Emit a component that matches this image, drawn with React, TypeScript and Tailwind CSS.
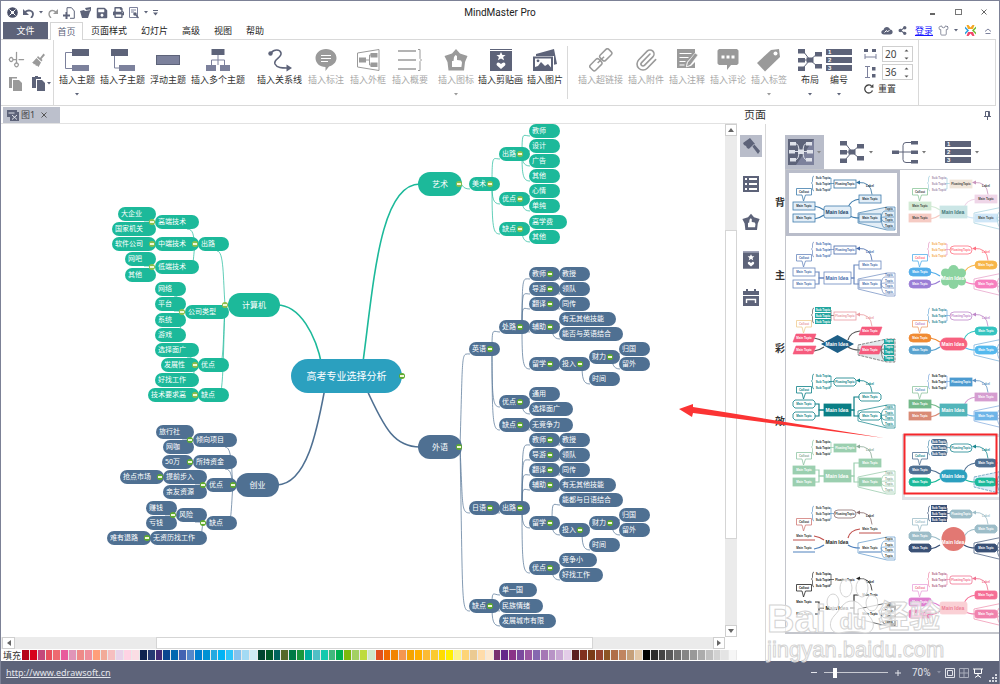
import type { ReactNode } from "react";
import { FaPrint, FaSave, FaShareAlt } from "react-icons/fa";
import { Paperclip, Scissors, Shirt } from "lucide-react";

const DARK = "#5d6379";
const LIGHT = "#7c819c";
const GRAY = "#9a9a9a";

const GREEN = "#1cb99a";
const BLUE = "#4f7092";

/* ---------- mind map data ---------- */

type Topic = { x: number; y: number; text: string; kids: Topic[] };

const t = (x: number, y: number, text: string, kids: Topic[] = []): Topic => ({ x, y, text, kids });

type Branch = { root: Topic; w: number; color: string; side: "left" | "right"; link: string };

// where the sheet starts inside the window
const OX = 1;
const OY = 124;

const BRANCHES: Branch[] = [
  {
    color: GREEN,
    side: "right",
    w: 44,
    link: "M363 362 C374 280 380 184 420 184",
    root: t(418, 184, "艺术", [
      t(469, 184, "美术", [
        t(499, 154, "出路", [t(529, 131, "教师"), t(529, 146, "设计"), t(529, 161, "广告"), t(529, 176, "其他")]),
        t(499, 199, "优点", [t(529, 191, "心情"), t(529, 206, "单纯")]),
        t(499, 229, "缺点", [t(529, 222, "高学费"), t(529, 237, "其他")]),
      ]),
    ]),
  },
  {
    color: BLUE,
    side: "right",
    w: 44,
    link: "M366 388 C385 430 395 447 420 447",
    root: t(418, 447, "外语", [
      t(469, 349, "英语", [
        t(499, 327, "处路", [
          t(529, 274, "教师", [t(559, 274, "教授")]),
          t(529, 289, "导游", [t(559, 289, "领队")]),
          t(529, 304, "翻译", [t(559, 304, "同传")]),
          t(529, 327, "辅助", [t(559, 319, "有无其他技能"), t(559, 334, "能否与英语结合")]),
          t(529, 364, "留学", [
            t(559, 364, "投入", [
              t(589, 357, "财力", [t(619, 349, "归国"), t(619, 364, "留外")]),
              t(589, 379, "时间"),
            ]),
          ]),
        ]),
        t(499, 402, "优点", [t(529, 394, "通用"), t(529, 409, "选择面广")]),
        t(499, 425, "缺点", [t(529, 425, "无竞争力")]),
      ]),
      t(469, 508, "日语", [
        t(499, 508, "出路", [
          t(529, 440, "教师", [t(559, 440, "教授")]),
          t(529, 455, "导游", [t(559, 455, "领队")]),
          t(529, 470, "翻译", [t(559, 470, "同传")]),
          t(529, 485, "辅助", [t(559, 485, "有无其他技能")]),
          t(529, 523, "留学", [
            t(559, 500, "能都与日语结合"),
            t(559, 530, "投入", [
              t(589, 523, "财力", [t(619, 515, "归国"), t(619, 530, "留外")]),
              t(589, 545, "时间"),
            ]),
          ]),
          t(529, 568, "优点", [t(559, 560, "竞争小"), t(559, 575, "好找工作")]),
        ]),
      ]),
      t(469, 606, "缺点", [t(499, 590, "单一国"), t(499, 606, "民族情绪"), t(499, 621, "发展城市有限")]),
    ]),
  },
  {
    color: GREEN,
    side: "left",
    w: 52,
    link: "M277 305 C300 305 316 335 322 366",
    root: t(228, 305, "计算机", [
      t(198, 244, "出路", [
        t(155, 222, "高端技术", [t(118, 214, "大企业"), t(112, 229, "国家机关")]),
        t(155, 244, "中端技术", [t(112, 244, "软件公司")]),
        t(155, 267, "低端技术", [t(125, 259, "网吧"), t(125, 275, "其他")]),
      ]),
      t(185, 312, "公司类型", [t(155, 289, "网络"), t(155, 304, "平台"), t(155, 320, "系统"), t(155, 335, "游戏")]),
      t(198, 365, "优点", [t(155, 350, "选择面广"), t(161, 365, "发展性"), t(155, 380, "好找工作")]),
      t(198, 395, "缺点", [t(148, 395, "技术要求高")]),
    ]),
  },
  {
    color: BLUE,
    side: "left",
    w: 43,
    link: "M277 485 C308 484 318 425 325 388",
    root: t(236, 485, "创业", [
      t(193, 440, "倾向项目", [t(156, 432, "旅行社"), t(163, 447, "网咖")]),
      t(193, 462, "所持资金", [t(162, 462, "50万")]),
      t(206, 485, "优点", [t(163, 477, "提前步入", [t(120, 477, "抢点市场")]), t(163, 492, "亲友资源")]),
      t(206, 523, "缺点", [
        t(176, 515, "风险", [t(146, 508, "赚钱"), t(146, 523, "亏钱")]),
        t(150, 538, "无资历找工作", [t(107, 538, "难有退路")]),
      ]),
    ]),
  },
];

// two digits take the room of one Chinese character
function topicWidth(text: string) {
  const chars = [...text].reduce((sum, c) => sum + (c < "\u0080" ? 0.5 : 1), 0);
  return Math.round(31 + (chars - 2) * 6.5);
}

function flatten(topic: Topic): Topic[] {
  return topic.kids.flatMap((kid) => [...flatten(kid), kid]);
}

function linksOf(topic: Topic, side: "left" | "right", root: boolean): string[] {
  return topic.kids.flatMap((kid) => {
    const end = kid.y + (kid.y < topic.y && side === "left" ? 7 : 5);
    let d: string;
    if (side === "right") {
      const x = topic.x + (root ? 42 : 23);
      d = `M${x} ${topic.y} C${x + (root ? 3 : 0)} ${end - 6} ${x + 1} ${end} ${kid.x + 1} ${end}`;
    } else {
      const x = topic.x - 3;
      const right = kid.x + topicWidth(kid.text) - 12;
      d = `M${x} ${topic.y} C${x - 2} ${(topic.y + end) / 2} ${x - 1} ${end} ${right} ${end}`;
    }
    return [d, ...linksOf(kid, side, false)];
  });
}

function Badge({ x, y, faded }: { x: number; y: number; faded?: boolean }) {
  return (
    <div
      className={`absolute flex size-[6px] items-center justify-center rounded-full ${faded ? "bg-[#8cbf4a]" : "bg-[#5eab2e]"}`}
      style={{ left: x - OX - 3, top: y - OY - 3 }}
    >
      <div className="h-[2px] w-[4px] bg-[#f1f7d8]" />
    </div>
  );
}

function MindMap() {
  return (
    <div className="relative min-w-0 flex-1 overflow-hidden bg-white">
      <svg className="absolute left-0 top-0" width="724" height="514" viewBox="1 124 724 514" fill="none">
        {BRANCHES.map((b) => (
          <g key={b.root.text} stroke={b.color}>
            <path d={b.link} strokeWidth="1.6" />
            {linksOf(b.root, b.side, true).map((d, i) => (
              <path key={i} d={d} strokeWidth="0.7" />
            ))}
          </g>
        ))}
      </svg>
      {BRANCHES.map((b) => {
        const topics = flatten(b.root);
        const fill = b.color === GREEN ? "bg-[#1cb99a]" : "bg-[#4f7092]";
        return (
          <div key={b.root.text}>
            {topics.map((n) => (
              <div
                key={`${n.x}-${n.y}`}
                className={`absolute h-[14px] whitespace-nowrap rounded-full pl-[3px] text-[7px] leading-[14px] text-white ${fill}`}
                style={{ left: n.x - OX, top: n.y - OY - 7, width: topicWidth(n.text) }}
              >
                {n.text}
              </div>
            ))}
            <div
              className={`absolute h-[24px] rounded-full text-center text-[8px] leading-[24px] text-white ${fill}`}
              style={{ left: b.root.x - OX, top: b.root.y - OY - 12, width: b.w }}
            >
              {b.root.text}
            </div>
            {topics
              .filter((n) => n.kids.length > 0)
              .map((n) => (
                <Badge key={`${n.x}-${n.y}`} x={b.side === "right" ? n.x + 21 : n.x - 3} y={n.y} faded={b.color === GREEN} />
              ))}
            <Badge x={b.side === "right" ? b.root.x + 41 : b.root.x - 3} y={b.root.y} faded={b.color === GREEN} />
          </div>
        );
      })}
      <div
        className="absolute h-[34px] w-[111px] rounded-full bg-[#2ba0bf] text-center text-[10px] leading-[34px] text-white"
        style={{ left: 291 - OX, top: 359 - OY }}
      >
        高考专业选择分析
      </div>
      <Badge x={402} y={376} />
    </div>
  );
}

/* ---------- small icons ---------- */

function Caret({ color = DARK }: { color?: string }) {
  return (
    <svg width="4" height="3" viewBox="0 0 4 3" className="shrink-0">
      <path d="M0 0h4L2 2.6z" fill={color} />
    </svg>
  );
}

function Icon({ size = 24, w, children }: { size?: number; w?: number; children: ReactNode }) {
  return (
    <svg width={w ?? size} height={size} viewBox={`0 0 ${w ?? size} ${size}`} fill="none" className="shrink-0">
      {children}
    </svg>
  );
}

const STAR = "M12 4l1.4 3h3.2l-2.5 2.1 1 3.2L12 10.5l-3.1 1.8 1-3.2L7.4 7h3.2z";
const HEART = "M12 21l-4-3.6c-1.5-2 1-4 2.6-2.4l1.4 1 1.4-1c1.6-1.6 4.1.4 2.6 2.4z";

const hand = <path d="M8 19v-6h1.5l.5-4 1.500-2 1.500 1V12l4 .6 1 2-.6 4.400z" fill="#fff" />;

const icons = {
  topic: (
    <Icon>
      <path d="M7 4.5H.5v16H7" stroke={LIGHT} />
      <path fill={DARK} d="M7 1h17v7H7z" />
      <path fill={LIGHT} d="M7 17h17v6H7z" />
    </Icon>
  ),
  subtopic: (
    <Icon>
      <path d="M3.5 8v12H8" stroke={LIGHT} />
      <path fill={DARK} d="M0 1h17v7H0z" />
      <path fill={LIGHT} d="M8 17h16v6H8z" />
    </Icon>
  ),
  floating: (
    <Icon>
      <path fill={DARK} d="M0 7h24v10H0z" />
      <path fill={LIGHT} d="M1 8h22v8H1z" />
    </Icon>
  ),
  multi: (
    <Icon>
      <path d="M12 7v10M5.5 18v-6h13v6" stroke={LIGHT} />
      <path fill={DARK} d="M5.5 1h13v6h-13z" />
      <path fill={LIGHT} d="M0 17h10v6H0zM14 17h10v6H14z" />
    </Icon>
  ),
  relation: (
    <Icon>
      <path d="M3 5c3-4 9-4 10 0 1 5-8 6-6 11 2 4 7 4 12 4" stroke={DARK} strokeWidth="1.6" />
      <circle cx="2.5" cy="5.5" r="2.200" fill={DARK} />
      <path fill={DARK} d="M18.5 16.5 24 20l-5.500 3.500z" />
    </Icon>
  ),
  callout: (
    <Icon>
      <path fill={GRAY} d="M12 1c6 0 10.5 4 10.5 9 0 4-3 7.3-7.5 8.5L11.5 23v-4C5.6 19 1.5 15 1.5 10S6 1 12 1z" />
      <path d="M7 7.5h10M7 10.5h10M7 13.5h7" stroke="#fff" strokeWidth="1.2" />
    </Icon>
  ),
  boundary: (
    <Icon>
      <path d="M1.5 5 23 1.5v21L1.500 19z" stroke={GRAY} />
      <path d="M10 12h3.5M15 7h-1.5v10H15" stroke={GRAY} />
      <path fill={GRAY} d="M3 9.5h7v5H3zM14.5 5h7v4.5h-7zM14.5 14.5h7V19h-7z" />
    </Icon>
  ),
  summary: (
    <Icon>
      <path d="M0 3h18M0 12h18M0 21h18" stroke={GRAY} strokeWidth="1.6" />
      <path d="M20 1.5h2v9l1.5 1.5-1.5 1.5v9h-2" stroke={GRAY} />
    </Icon>
  ),
  mark: (
    <Icon>
      <path fill={GRAY} d="M12 1l4 4.5L23.5 8 21 14l-1 8.5H4.500L3.500 14 .5 8 8 5.500z" />
      {hand}
    </Icon>
  ),
  clipart: (
    <Icon>
      <path d="M1 1.5h22" stroke={DARK} />
      <path fill={DARK} d="M1 3h22v20H1z" />
      <path fill="#fff" d={STAR} />
      <path fill="#fff" d={HEART} />
    </Icon>
  ),
  picture: (
    <Icon>
      <path fill={DARK} d="M3 6 21 1l3 15-3 .8V8H3z" />
      <path fill={DARK} d="M0 8.5h20V23H0z" />
      <path fill="#fff" d="M2 10.5h16v9l-3-3.5-3 2-4-4-3 4-3 1z" />
      <circle cx="5" cy="12.8" r="1.4" fill={DARK} />
    </Icon>
  ),
  link: (
    <Icon>
      <g stroke={GRAY} strokeWidth="1.5" transform="rotate(-45 12 12)">
        <rect x="-1" y="8" width="12" height="7.5" rx="2" />
        <rect x="13" y="8" width="12" height="7.5" rx="2" />
        <path d="M7.5 11.8h9" />
      </g>
    </Icon>
  ),
  note: (
    <Icon>
      <path fill={GRAY} d="M2 1h18v5l-8 8-1 5 5-1 4-4v6H2z" />
      <path d="M4.5 5.5h12M4.5 9.5h9M4.5 13.5h6M4.5 17h5" stroke="#fff" strokeWidth="1.2" />
      <path fill={GRAY} stroke="#fff" strokeWidth=".6" d="M20 5l3 2-7.5 10-4 2 1-4.5z" />
    </Icon>
  ),
  comment: (
    <Icon>
      <path fill={GRAY} d="M3 1h18l1.5 1.5v13L21 17h-6l-4 5v-5H3l-1.500-1.500v-13z" />
      <path fill="#fff" d="M5.5 7.5h3v3h-3zM10.5 7.5h3v3h-3zM15.5 7.5h3v3h-3z" />
    </Icon>
  ),
  tag: (
    <Icon>
      <path fill={GRAY} d="M14 2l8-1 1 8L8 23.5 0 15z" />
      <circle cx="18.5" cy="5.5" r="2" fill="#fff" />
    </Icon>
  ),
};

function LayoutIcon() {
  return (
    <svg width="24" height="24" viewBox="0 0 24 24" className="shrink-0">
      <path d="M5 3l7 9 7-6M5 20l7-8 7 6M5 12h7" stroke={DARK} fill="none" />
      <path fill={DARK} d="M0 1h7v4.5H0zM0 10h7v4.5H0zM0 18.5h7V23H0zM8.5 9.5h7v5h-7zM17 4h7v4.5h-7zM17 16h7v4.5h-7z" />
    </svg>
  );
}

function NumberIcon() {
  return (
    <svg width="26" height="24" viewBox="0 0 26 24" className="shrink-0">
      <path fill={DARK} d="M0 1h26v6H0zM0 9h26v6H0zM0 17h26v6H0z" />
      <g fill="#fff" fontSize="6" fontWeight="700" fontFamily="Liberation Sans, sans-serif">
        <text x="2" y="6">1</text>
        <text x="2" y="14">2</text>
        <text x="2" y="22">3</text>
      </g>
    </svg>
  );
}

function TreeIcon() {
  return (
    <svg width="26" height="24" viewBox="0 0 26 24" className="shrink-0">
      <path d="M5 12h16M20 2.5h-6q-3 0-3 3v14q0 3 3 3h6" stroke={DARK} fill="none" />
      <path fill={DARK} d="M0 10.500h7v3.500H0zM19 1h7v3.500h-7zM19 10.500h7v3.500h-7zM19 20h7v3.500h-7z" />
    </svg>
  );
}

function ThemeIcon() {
  return (
    <svg width="26" height="26" viewBox="0 0 26 26" className="shrink-0">
      <path fill={DARK} d="M0 0h26v26H0z" />
      <path fill={LIGHT} d="M13 0h13L8 26h18V0z" />
      <path d="M7 4.500q4 0 4 8t-4 8.500M19 4.500q-4 0-4 8t4 8.500M7 12.500h12" stroke="#dfe2ea" fill="none" />
      <path fill="#dfe2ea" d="M2 3h6v3.500H2zM1 11h6v3.500H1zM2 19h6v3.500H2zM18 3h6v3.500h-6zM19 11h6v3.500h-6zM18 19h6v3.500h-6zM10 10.500h6v4.500h-6z" />
    </svg>
  );
}

/* ---------- title bar and tabs ---------- */

function TitleBar() {
  const btn = "flex h-[12px] items-center";
  return (
    <header className="grid h-[21px] shrink-0 grid-cols-[1fr_auto_1fr] items-center bg-white">
      <div className="flex items-center gap-[5px] pl-[6px] pt-[2px]">
        <button aria-label="程序" className={btn}>
          <Icon size={11}>
            <circle cx="5.5" cy="5.5" r="5.300" fill="#4a5068" />
            <path d="M2.500 2.500l6 6M8.500 2.500l-6 6" stroke="#fff" />
            <circle cx="5.5" cy="5.5" r="1.500" fill="#fff" />
          </Icon>
        </button>
        <button aria-label="撤销" className={btn}>
          <Icon size={10} w={11}>
            <path d="M2 4c4-3 8-1 8 2 0 2-1 3-2 4" stroke={DARK} strokeWidth="1.8" />
            <path d="M0 1v6h6z" fill={DARK} />
          </Icon>
        </button>
        <Caret />
        <button aria-label="恢复" className={btn}>
          <Icon size={10}>
            <path d="M8 4C4 1 1 3 1 6c0 2 1 3 2 4" stroke={GRAY} strokeWidth="1.4" />
            <path d="M10 1v5H5z" fill={GRAY} />
          </Icon>
        </button>
        <button aria-label="新建" className={btn}>
          <Icon size={12}>
            <path d="M4 5V.7h4.500L11.300 4v7.300H7" stroke={DARK} />
            <path d="M3.500 5v7M0 8.500h7" stroke={DARK} strokeWidth="2" />
          </Icon>
        </button>
        <button aria-label="打开" className={btn}>
          <Icon size={11}>
            <path fill={DARK} d="M0 4l4-1 1 1 5.500-1L8 11H2zM5 1l6-1v5l-1-2.500-4 .6z" />
          </Icon>
        </button>
        <button aria-label="保存" className={btn}>
          <FaSave size={12} color={DARK} />
        </button>
        <button aria-label="打印" className={btn}>
          <FaPrint size={11} color={DARK} />
        </button>
        <button aria-label="预览" className={btn}>
          <Icon size={12} w={10}>
            <path d="M.5.500h8v10h-8zM2 3h5M2 5h3" stroke={LIGHT} />
            <circle cx="6" cy="7" r="1.800" fill={DARK} />
            <path d="M7 8l2.500 3" stroke={DARK} strokeWidth="1.4" />
          </Icon>
        </button>
        <Caret />
        <Icon size={6} w={5}>
          <path d="M0 .5h5" stroke={DARK} />
          <path d="M0 2.500h5L2.500 5.500z" fill={DARK} />
        </Icon>
      </div>
      <h1 className="pt-[2px] font-[Roboto] text-[10px] leading-none text-[#222]">MindMaster Pro</h1>
      <div className="flex justify-end pr-[2px]">
        <button aria-label="最小化" className="flex h-[18px] w-[26px] items-center justify-center">
          <div className="mt-[4px] h-[2px] w-[5px] bg-[#666]" />
        </button>
        <button aria-label="最大化" className="flex h-[18px] w-[26px] items-center justify-center">
          <div className="h-[6px] w-[7px] border border-[#777]" />
        </button>
        <button aria-label="关闭" className="flex h-[18px] w-[26px] items-center justify-center">
          <Icon size={6}>
            <path d="M.5.500l5 5M5.500.500l-5 5" stroke="#666" />
          </Icon>
        </button>
      </div>
    </header>
  );
}

const MENU = ["页面样式", "幻灯片", "高级", "视图", "帮助"];

function MenuBar() {
  return (
    <nav className="flex h-[17px] shrink-0 items-stretch pl-[2px] text-[9px] text-[#222]">
      <button className="w-[45px] bg-[#5d6379] text-white">文件</button>
      <button className="z-10 -mb-px ml-[2px] w-[33px] border border-b-0 border-[#d5d5d5] bg-white text-[#5d6379]">首页</button>
      <div className="flex gap-[14px] pl-[8px]">
        {MENU.map((m) => (
          <button key={m}>{m}</button>
        ))}
      </div>
      <div className="ml-auto flex items-center gap-[5px] pr-[7px]">
        <Icon size={9} w={12}>
          <path fill={DARK} d="M3 8.500C-.5 8.500-.500 4.500 2.500 4 3 0 8.500 0 9 3.500c3.500 0 3.500 5 0 5z" />
          <path d="M3.500 6.500l2-2 1 1.500 2-2" stroke="#fff" />
        </Icon>
        <FaShareAlt size={9} color={DARK} />
        <a href="#login" className="ml-[3px] text-[#1414ff] underline">登录</a>
        <Shirt size={11} color={DARK} strokeWidth={1.5} />
        <Caret />
        <span className="ml-[2px]">
          <Icon size={11}>
            <path d="M1.500 0h2L5.500 2.500 7.500 0h2L8 4H3z" fill="#f5a623" />
            <path d="M1.500 11h2l2-2.500 2 2.500h2L8 7H3z" fill="#f0476b" />
            <path d="M0 1.500l4 4-4 4v-2l2-2-2-2z" fill="#2a9fe0" />
            <path d="M11 1.500l-4 4 4 4v-2l-2-2 2-2z" fill="#6dbb2f" />
          </Icon>
        </span>
        <span className="ml-[3px]">
          <Icon size={6} w={8}>
            <path d="M1 3.500L4 1l3 2.500M1.500 5.500h5" stroke={LIGHT} />
          </Icon>
        </span>
      </div>
    </nav>
  );
}

/* ---------- ribbon ---------- */

type Tool = { label: string; icon: ReactNode; off?: boolean; menu?: boolean };

const INSERT: Tool[] = [
  { label: "插入主题", icon: icons.topic, menu: true },
  { label: "插入子主题", icon: icons.subtopic },
  { label: "浮动主题", icon: icons.floating },
  { label: "插入多个主题", icon: icons.multi },
];

const RELATE: Tool[] = [
  { label: "插入关系线", icon: icons.relation },
  { label: "插入标注", icon: icons.callout, off: true },
  { label: "插入外框", icon: icons.boundary, off: true },
  { label: "插入概要", icon: icons.summary, off: true },
];

const MEDIA: Tool[] = [
  { label: "插入图标", icon: icons.mark, off: true, menu: true },
  { label: "插入剪贴画", icon: icons.clipart },
  { label: "插入图片", icon: icons.picture },
];

const ATTACH: Tool[] = [
  { label: "插入超链接", icon: icons.link, off: true },
  { label: "插入附件", icon: <Paperclip size={24} color={GRAY} strokeWidth={1.6} />, off: true },
  { label: "插入注释", icon: icons.note, off: true },
  { label: "插入评论", icon: icons.comment, off: true },
  { label: "插入标签", icon: icons.tag, off: true, menu: true },
];

const ARRANGE: Tool[] = [
  { label: "布局", icon: <LayoutIcon />, menu: true },
  { label: "编号", icon: <NumberIcon />, menu: true },
];

function ToolGroup({ tools, className, short }: { tools: Tool[]; className: string; short?: boolean }) {
  return (
    <div className={`flex shrink-0 ${className}`}>
      {tools.map((tool) => (
        <button key={tool.label} disabled={tool.off} className="flex flex-col items-center pt-[8px]">
          {tool.icon}
          <span className={`mt-[2px] whitespace-nowrap text-[9px] leading-[12px] ${tool.off ? "text-[#a8a8a8]" : "text-[#333]"}`}>
            {tool.label}
          </span>
          {tool.menu && (
            <span className="mt-[7px]">
              <Caret color={tool.off ? GRAY : DARK} />
            </span>
          )}
        </button>
      ))}
      <div className={`ml-auto w-px bg-[#d9d9d9] ${short ? "my-[6px]" : ""}`} />
    </div>
  );
}

function Spinner({ id, label, value }: { id: string; label: string; value: number }) {
  return (
    <div className="flex h-[16px] w-[31px] items-center border border-[#cfcfcf] bg-white pl-[2px]">
      <input id={id} aria-label={label} defaultValue={value} className="w-[17px] text-[10px] leading-none text-[#444] outline-none" />
      <svg width="5" height="11" viewBox="0 0 5 11" className="ml-[2px]">
        <path d="M.5 2.500h4L2.500.500zM.5 8.500h4l-2 2z" fill="#555" />
      </svg>
    </div>
  );
}

function Ribbon() {
  return (
    <section className="mr-[3px] flex h-[67px] shrink-0 border-y border-r border-[#d9d9d9] bg-white">
      <div className="flex w-[53px] shrink-0">
        <div className="grid grid-cols-2 content-start items-center gap-x-[4px] gap-y-[9px] pl-[8px] pt-[12px]">
          <button aria-label="剪切" disabled>
            <Scissors size={15} color={GRAY} className="-rotate-45" />
          </button>
          <button aria-label="格式刷" disabled>
            <Icon size={14} w={13}>
              <path fill={GRAY} d="M8 5l3.500-4.500L13 2 9.500 6l1 1-1 1.500L5 4.500 6 3zM4.500 5l4.500 4.500L6.500 14l-1.500-1.500L4 13l-1-2-1 .5-1-1.500-1 0z" />
            </Icon>
          </button>
          <button aria-label="复制" disabled>
            <Icon size={14}>
              <path fill={GRAY} d="M0 0h8v1.500H3V11H0z" />
              <path fill={GRAY} d="M4 3h6l3 3v8H4z" />
            </Icon>
          </button>
          <button aria-label="粘贴" className="flex items-center gap-[2px]">
            <Icon size={15} w={13}>
              <path fill={DARK} d="M0 1h3V0h3v1h3v2H4v9H0z" />
              <path fill={DARK} d="M5 4h5l3 3v8H5z" />
            </Icon>
            <Caret />
          </button>
        </div>
        <div className="ml-auto w-px bg-[#d9d9d9]" />
      </div>
      <ToolGroup tools={INSERT} className="w-[194px] gap-[5px] pl-[5px]" short />
      <ToolGroup tools={RELATE} className="w-[185px] gap-[6px] pl-[9px]" />
      <ToolGroup tools={MEDIA} className="w-[135px] gap-[4px] pl-[5px]" short />
      <ToolGroup tools={ATTACH} className="w-[223px] gap-[5px] pl-[10px]" />
      <ToolGroup tools={ARRANGE} className="w-[64px] gap-[4px] pl-[7px]" short />
      <div className="flex w-[64px] shrink-0">
        <div className="flex flex-col gap-[2px] pl-[9px] pt-[6px]">
          <label htmlFor="h-gap" className="flex items-center gap-[5px]">
            <Icon size={12} w={13}>
              <path d="M1 6v5M12 6v5M1 9h11" stroke={LIGHT} />
              <path fill={DARK} d="M0 1h4v3H0zM8 1h4v3H8z" />
            </Icon>
            <Spinner id="h-gap" label="水平间距" value={20} />
          </label>
          <label htmlFor="v-gap" className="flex items-center gap-[5px]">
            <Icon size={12} w={13}>
              <path d="M1 .5h5M1 11.500h5M3.500.500v11" stroke={LIGHT} />
              <path fill={DARK} d="M8 1h3.500v3.500H8zM8 8h3.500v3.500H8z" />
            </Icon>
            <Spinner id="v-gap" label="垂直间距" value={36} />
          </label>
          <button className="flex items-center gap-[4px] text-[9px] text-[#333]">
            <Icon size={10}>
              <path d="M8.500 6.500A4 4 0 1 1 7.500 2" stroke="#444" strokeWidth="1.3" />
              <path d="M6 3.500L9.500 3.800 9.300 0z" fill="#444" />
            </Icon>
            重置
          </button>
        </div>
        <div className="ml-auto w-px bg-[#d9d9d9]" />
      </div>
    </section>
  );
}

/* ---------- drawing area ---------- */

function DocTabs() {
  return (
    <div className="flex h-[18px] shrink-0 items-end border-b border-[#e2e2e2] pl-[2px]">
      <div className="flex h-[16px] w-[57px] items-center bg-[#bcc0cc] pl-[4px] text-[9px] text-[#444]">
        <Icon size={12}>
          <path fill={DARK} d="M0 1h10v2h2v9H3V8H0z" />
          <path d="M1.500 4h6M5 6l5 4.500M10 6l-5 4.500" stroke="#dfe2ea" />
        </Icon>
        <span className="ml-[2px]">图1</span>
        <button aria-label="关闭图1" className="ml-[6px]">
          <Icon size={6}>
            <path d="M.5.500l5 5M5.500.500l-5 5" stroke="#555" />
          </Icon>
        </button>
      </div>
    </div>
  );
}

function VerticalScroll() {
  return (
    <div className="flex w-[12px] shrink-0 flex-col bg-[#ebebeb]">
      <button aria-label="向上" className="flex h-[12px] shrink-0 items-center justify-center border border-[#cfcfcf] bg-white">
        <Icon size={4} w={6}><path d="M0 4h6L3 0z" fill="#666" /></Icon>
      </button>
      <div className="basis-[94px]" />
      <div className="flex-1 border border-[#d5d5d5] bg-white" />
      <div className="basis-[86px]" />
      <button aria-label="向下" className="flex h-[12px] shrink-0 items-center justify-center border border-[#cfcfcf] bg-white">
        <Icon size={4} w={6}><path d="M0 0h6L3 4z" fill="#666" /></Icon>
      </button>
    </div>
  );
}

function HorizontalScroll() {
  return (
    <div className="mr-[12px] flex h-[12px] shrink-0 bg-[#ebebeb]">
      <button aria-label="向左" className="ml-px flex w-[13px] items-center justify-center border border-[#cfcfcf] bg-white">
        <Icon size={6} w={4}><path d="M4 0v6L0 3z" fill="#666" /></Icon>
      </button>
      <div className="basis-[141px]" />
      <div className="flex-1 border border-[#d5d5d5] bg-white" />
      <div className="basis-[120px]" />
      <button aria-label="向右" className="flex w-[12px] items-center justify-center border border-[#cfcfcf] bg-white">
        <Icon size={6} w={4}><path d="M0 0v6l4-3z" fill="#666" /></Icon>
      </button>
    </div>
  );
}

const SWATCHES = (
  "b5051b d7001c c4487b e8505e ee6a70 e85a9c e095b8 ee8a88 ef8f9c ff9f7a f2ab98 f6bfc0 e8d3ea ffd3e4 fbdde4 " +
  "0f2350 263a73 432a76 0a4690 0068b0 4363b2 5588ca 007fd0 0092d4 25a9e0 00b3f4 2ec5fa 84c2ee a3daf4 cfedf6 " +
  "00452f 005a28 00645e 56682a 007a45 1a963c 00aea0 50bfc6 14c9ad 42b87c 00b04f 7eb90c a3d063 bedb3c cfe9c8 " +
  "e2501c f06800 f18400 f49650 f5a400 ffae00 fcbb35 fbca30 ffdc00 fff000 fdf488 fdd475 ebca92 ffdcaa fce8d0 " +
  "79306f 65268a 8a3487 7b4a9e 9b57a2 8568b0 a678b5 b894c6 c9a8d4 e3cce8 " +
  "5c1f20 80301e 7a3b18 96432f 8d5524 b06d48 c08560 c5a07a e2c8a8 " +
  "000000 2b2b2b 444444 5a5a5a 707070 858585 999999 acacac c0c0c0 d2d2d2 e4e4e4 f6f6f6"
).split(" ");

function ColorBar() {
  return (
    <div className="flex h-[12px] shrink-0 items-center pl-[2px]">
      <span className="w-[19px] shrink-0 text-[9px] leading-none text-[#333]">填充</span>
      <div className="flex h-[10px] flex-1 bg-[#e9e9e9]">
        {SWATCHES.map((c, i) => (
          <div key={i} className="mr-px flex-1" style={{ backgroundColor: `#${c}` }} />
        ))}
      </div>
    </div>
  );
}

/* ---------- theme gallery ---------- */

type Shape = "rect" | "round" | "pill" | "hex" | "para" | "diamond" | "cloud" | "circle" | "none" | "line";

type Theme = {
  main: string;
  mainShape: Shape;
  mainText: string;
  topics: [string, string, string, string];
  topicShape: Shape;
  text: string;
  line: string;
  accent: string;
  callout: string;
  floating?: string;
  sub?: string;
  outline?: boolean;
  area?: string;
  square?: boolean;
};

const four = (c: string): [string, string, string, string] => [c, c, c, c];

const THEMES: Theme[] = [
  { main: "#e3eef7", mainShape: "round", mainText: "#1c3f66", topics: four("#e3eef7"), topicShape: "rect", text: "#1d3348", line: "#3f7cac", accent: "#2d6f9f", callout: "#3f7cac", outline: true, area: "#e3eef7" },
  { main: "#cbe6e6", mainShape: "rect", mainText: "#467879", topics: ["#d3ead5", "#f6cbc4", "#efd6e8", "#cfe6f7"], topicShape: "rect", text: "#444", line: "#a0cfdc", accent: "#c995bd", callout: "#8cc79a", floating: "#f1e6da", sub: "#a58aa8" },
  { main: "#fff", mainShape: "rect", mainText: "#4468a8", topics: four("#fff"), topicShape: "rect", text: "#4468a8", line: "#6a88be", accent: "#4468a8", callout: "#6a88be", outline: true, square: true },
  { main: "#8bd3a0", mainShape: "cloud", mainText: "#fff", topics: ["#54aeea", "#9b7fd6", "#f7b64a", "#f77fbf"], topicShape: "pill", text: "#fff", line: "#e59ac4", accent: "#ff6f80", callout: "#54aeea", sub: "#f5a94e" },
  { main: "#1d5f87", mainShape: "diamond", mainText: "#fff", topics: four("#f65b7d"), topicShape: "para", text: "#fff", line: "#555", accent: "#e89aa0", callout: "#f0cc90", sub: "fill:#22a6a0", area: "#e2eaec" },
  { main: "#f7617f", mainShape: "pill", mainText: "#fff", topics: ["#f08a33", "#5aa3cf", "#35c4c0", "#54b9ee"], topicShape: "pill", text: "#fff", line: "#6baad8", accent: "#be86c9", callout: "#f0a070", sub: "#2b7f8e" },
  { main: "#0a7f86", mainShape: "rect", mainText: "#fff", topics: four("#fff"), topicShape: "hex", text: "#0a7f86", line: "#0a7f86", accent: "#0a7f86", callout: "#0a7f86", outline: true, square: true },
  { main: "#52b5ba", mainShape: "rect", mainText: "#fff", topics: ["#74b98a", "#d98b76", "#d59dd0", "#6fb5e8"], topicShape: "rect", text: "#fff", line: "#7da8dd", accent: "#6090c0", callout: "#8fc49f", floating: "#4d9bd0", sub: "#222" },
  { main: "#9bcfb0", mainShape: "rect", mainText: "#fff", topics: four("#9bcfb0"), topicShape: "rect", text: "#fff", line: "#8fc5a4", accent: "#8aa896", callout: "#8fc5a4", floating: "#9bcfb0", sub: "#222", square: true },
  { main: "#2ba0bf", mainShape: "pill", mainText: "#fff", topics: ["#4f7092", "#1cb99a", "#4f7092", "#1cb99a"], topicShape: "pill", text: "#fff", line: "#4f8fb0", accent: "#18868f", callout: "#4f7092", sub: "fill:#4f7092", area: "#e0edf8" },
  { main: "#fff", mainShape: "none", mainText: "#222", topics: ["#c0504d", "#4f81bd", "#c0504d", "#4f81bd"], topicShape: "line", text: "#333", line: "#5b95c8", accent: "#8a6c6c", callout: "#d07a76" },
  { main: "#e27873", mainShape: "circle", mainText: "#fff", topics: ["#9dbdc8", "#3a5176", "#9dbdc8", "#3a5176"], topicShape: "hex", text: "#fff", line: "#3a5176", accent: "#9dbdc8", callout: "#9dbdc8", floating: "#9dbdc8", sub: "fill:#3a5176" },
  { main: "#fff", mainShape: "none", mainText: "#111", topics: four("#fff"), topicShape: "none", text: "#111", line: "#333", accent: "#222", callout: "#222", square: true },
  { main: "#fad0d5", mainShape: "round", mainText: "#ee7f96", topics: ["#de7fd0", "#ec76b0", "#f56f96", "#f082ad"], topicShape: "round", text: "#fff", line: "#ef8aab", accent: "#f0708f", callout: "#e8a3dc", sub: "#b06080" },
];

function Box({ x, y, w, h, shape, fill, stroke }: { x: number; y: number; w: number; h: number; shape: Shape; fill: string; stroke: string }) {
  const cx = x + w / 2;
  const cy = y + h / 2;
  switch (shape) {
    case "none":
      return null;
    case "line":
      return <path d={`M${x} ${y + h}h${w}`} stroke={stroke} />;
    case "diamond":
      return <path d={`M${x - 3} ${cy}L${cx} ${y - 3}L${x + w + 3} ${cy}L${cx} ${y + h + 3}z`} fill={fill} />;
    case "circle":
      return <circle cx={cx} cy={cy - 3} r="12" fill={fill} />;
    case "cloud":
      return (
        <g fill={fill}>
          <circle cx={cx} cy={cy - 2} r="9" />
          <circle cx={cx} cy={cy - 8} r="5" />
          <circle cx={cx - 8} cy={cy - 5} r="4.500" />
          <circle cx={cx + 8} cy={cy - 5} r="4.500" />
          <circle cx={cx - 8} cy={cy + 3} r="4.500" />
          <circle cx={cx + 8} cy={cy + 3} r="4.500" />
          <circle cx={cx} cy={cy + 6} r="5" />
        </g>
      );
    case "para":
      return <path d={`M${x + 3} ${y}h${w - 2}l-3 ${h}h${2 - w}z`} fill={fill} stroke={stroke} strokeWidth=".6" />;
    case "hex":
      return <path d={`M${x + 2} ${y}h${w - 4}l2 2v${h - 4}l-2 2h${4 - w}l-2 -2v${4 - h}z`} fill={fill} stroke={stroke} strokeWidth=".8" />;
    default:
      return <rect x={x} y={y} width={w} height={h} rx={shape === "pill" ? h / 2 : shape === "round" ? 2 : 0} fill={fill} stroke={stroke} strokeWidth=".8" />;
  }
}

function ThemePreview({ theme }: { theme: Theme }) {
  const { line, topics, topicShape, accent } = theme;
  const subFilled = theme.sub?.startsWith("fill:");
  const subColor = theme.sub?.replace("fill:", "") ?? theme.text;
  const plain = theme.text === "#fff" ? accent : theme.text;
  const edge = (c: string) => (theme.outline ? line : c);
  const wire = (i: number) => (theme.outline || topics[i] === "#fff" || theme.topicShape === "para" ? line : topics[i]);
  const spots = [
    [7, 32],
    [7, 44],
    [73, 25],
    [73, 44],
  ];
  const curves = theme.square
    ? ["M29 36h4v6h5", "M29 48h4v-6h5", "M64 42h4V29h5", "M64 42h4v6h5"]
    : ["M28 36q6 1 10 4", "M28 49q6-1 10-4", "M62 38q2-8 12-9", "M62 45q4 3 12 3"];
  return (
    <svg width="114" height="66" viewBox="0 0 114 66" fill="none" fontFamily="Liberation Sans, sans-serif">
      <path d="M72 43L101 37h8v23h-8L72 53z" fill={theme.area ?? "none"} stroke={line} strokeWidth=".7" strokeDasharray={theme.area && !theme.outline ? "3 1" : undefined} />
      {curves.map((d, i) => (
        <path key={d} d={d} stroke={wire(i)} strokeWidth="1.2" />
      ))}
      <Box x={38} y={36} w={27} h={12} shape={theme.mainShape} fill={theme.main} stroke={edge(theme.main)} />
      <text x="51" y="44" textAnchor="middle" fontSize="5" fontWeight="700" fill={theme.mainText}>Main Idea</text>
      {spots.map(([x, y], i) => (
        <g key={i}>
          <Box x={x} y={y} w={22} h={8} shape={topicShape} fill={topics[i]} stroke={edge(topics[i])} />
          <text x={x + 11} y={y + 5} textAnchor="middle" fontSize="3" fontWeight="700" fill={theme.text}>Main Topic</text>
        </g>
      ))}
      <path d="M10.500 18.500h15v6.500h-6l-2 6-1.500-6h-5.500z" fill="#fff" stroke={theme.callout} strokeWidth=".8" />
      <text x="18" y="23" textAnchor="middle" fontSize="3" fontWeight="700" fill={plain}>Callout</text>
      <path d="M28 6q-1.500 0-1.500 3v2.500l-1 1.500 1 1.500V18q0 3 1.500 3M43 8h2v11h-2M43 13.500h5" stroke={line} strokeWidth=".7" />
      {[8, 14, 20].map((y) => (
        <g key={y}>
          {subFilled && <rect x="29" y={y - 3} width="16" height="5" rx={topicShape === "pill" ? 2.5 : 0} fill={subColor} />}
          <text x="37" y={y + 1} textAnchor="middle" fontSize="3" fontWeight="700" fill={subFilled ? "#fff" : subColor}>Sub Topic</text>
        </g>
      ))}
      <Box x={48} y={10} w={22} h={8} shape={topicShape === "para" ? "rect" : topicShape === "line" ? "pill" : topicShape} fill={theme.floating ?? "#fff"} stroke={theme.floating ?? accent} />
      <text x="59" y="15" textAnchor="middle" fontSize="3" fontWeight="700" fill={theme.floating && theme.text === "#fff" ? "#fff" : plain}>FloatingTopic</text>
      <path d="M72 12.500q13-1 14 12" stroke={accent} strokeWidth=".8" />
      <path d="M70 12.500l4-2v4z" fill={accent} />
      <text x="84" y="17" textAnchor="middle" fontSize="3" fontWeight="700" fill={plain}>Label</text>
      {[40, 46, 51, 57].map((y) => (
        <g key={y}>
          <path d={`M95 48Q96 ${y + 1} 99 ${y + 1}h9`} stroke={line} strokeWidth=".7" />
          {subFilled && topicShape === "para" && <rect x="98" y={y - 3} width="10" height="5" fill={subColor} />}
          <text x="103" y={y} textAnchor="middle" fontSize="3" fontWeight="700" fill={subFilled && topicShape === "para" ? "#fff" : plain}>Topic</text>
        </g>
      ))}
    </svg>
  );
}

function Gallery() {
  return (
    <div className="flex min-w-0 flex-1 flex-col overflow-hidden pt-[11px]">
      <div className="flex h-[34px] shrink-0 items-center">
        <button aria-label="主题" className="flex h-full w-[39px] items-center gap-[3px] bg-[#b9bdca] pl-[3px]">
          <ThemeIcon />
          <Caret color="#888" />
        </button>
        <button aria-label="布局样式" className="ml-[16px] flex items-center gap-[5px]">
          <LayoutIcon />
          <Caret color="#777" />
        </button>
        <button aria-label="连线样式" className="ml-[19px] flex items-center gap-[4px]">
          <TreeIcon />
          <Caret color="#777" />
        </button>
        <button aria-label="编号样式" className="ml-[19px] flex items-center gap-[4px]">
          <NumberIcon />
          <Caret color="#777" />
        </button>
      </div>
      <div className="grid w-[232px] grid-cols-[114px_114px] gap-x-[2px] border-b-2 border-l border-t border-[#c4c6cc] bg-white">
        {THEMES.map((theme, i) => (
          <button
            key={i}
            aria-label={`主题 ${i + 1}`}
            className={`h-[66px] overflow-hidden ${i === 0 ? "outline-3 -outline-offset-3 outline-[#b9bdca]" : ""} ${i === 9 ? "outline-3 -outline-offset-3 outline-[#e1e3e8]" : ""}`}
          >
            <ThemePreview theme={theme} />
          </button>
        ))}
      </div>
    </div>
  );
}

const SECTIONS = ["背", "主", "彩", "效"];

function SidePanel() {
  const tab = "flex size-[22px] items-center justify-center";
  return (
    <aside className="flex w-[262px] shrink-0 flex-col">
      <div className="flex h-[18px] shrink-0 items-center justify-between pl-[7px] pr-[8px]">
        <h2 className="text-[11px] text-[#333]">页面</h2>
        <Icon size={9} w={7}>
          <path d="M1.500.500h4v5h-4zM0 5.500h7M3.500 5.500V9M4.500.500v5" stroke={DARK} />
        </Icon>
      </div>
      <div className="flex min-h-0 flex-1">
        <div className="flex w-[29px] shrink-0 flex-col gap-4 border-r border-[#d9d9d9] pl-[3px] pt-[11px]">
          <button aria-label="样式" className={`${tab} bg-[#b9bdca]`}>
            <Icon size={18}>
              <path fill={DARK} d="M1 6l7-5 5 6-6 5-2-1-1-2-2-1zM10 9l2-2 6 7-2 3z" />
              <path d="M7.500 12l5-5" stroke="#b9bdca" />
            </Icon>
          </button>
          <button aria-label="大纲" className={tab}>
            <Icon size={16}>
              <path fill={DARK} d="M0 0h16v16H0z" />
              <path d="M6 3h8M6 8h8M6 13h8M2 3h2M2 8h2M2 13h2" stroke="#fff" strokeWidth="2" />
            </Icon>
          </button>
          <button aria-label="图标" className={tab}>
            <svg width="18" height="18" viewBox="0 0 24 24">
              <path fill={DARK} d="M12 1l4 4.500L23.500 8 21 14l-1 8.500H4.500L3.500 14 .5 8 8 5.500z" />
              {hand}
            </svg>
          </button>
          <button aria-label="剪贴画" className={tab}>
            <svg width="16" height="18" viewBox="1 0 22 24">
              <path fill={LIGHT} d="M1 0h22v2H1z" />
              <path fill={DARK} d="M1 2h22v22H1z" />
              <path fill="#fff" d={STAR} />
              <path fill="#fff" d={HEART} />
            </svg>
          </button>
          <button aria-label="任务" className={tab}>
            <Icon size={18} w={16}>
              <path fill={DARK} d="M0 2h3V0h2v2h6V0h2v2h3v4H0zM0 7h16v10H0z" />
              <path d="M3.500 14v-3.500h9V14" stroke="#fff" strokeWidth="1.4" />
            </Icon>
          </button>
        </div>
        <div className="w-[19px] shrink-0 pt-[42px]">
          {SECTIONS.map((s) => (
            <div key={s} className="flex h-[73px] items-center justify-end text-[10px] font-bold text-[#333]">
              {s}
            </div>
          ))}
        </div>
        <Gallery />
      </div>
    </aside>
  );
}

/* ---------- status bar and overlays ---------- */

function StatusBar() {
  return (
    <footer className="flex h-[23px] shrink-0 items-center bg-[#5d6379] pl-[5px] text-[10px] text-[#e4e6ec]">
      <a href="http://www.edrawsoft.cn" className="text-[9px] underline">http://www.edrawsoft.cn</a>
      <div className="ml-auto flex items-center">
        <button aria-label="缩小" className="h-px w-[6px] bg-[#e4e6ec]" />
        <input
          type="range"
          aria-label="缩放"
          min={0}
          max={100}
          defaultValue={15}
          className="mx-[7px] h-px w-[64px] appearance-none bg-[#c8cad2] [&::-webkit-slider-thumb]:h-[10px] [&::-webkit-slider-thumb]:w-[4px] [&::-webkit-slider-thumb]:appearance-none [&::-webkit-slider-thumb]:bg-white"
        />
        <button aria-label="放大">
          <Icon size={6}><path d="M3 0v6M0 3h6" stroke="#e4e6ec" /></Icon>
        </button>
        <span className="ml-[11px] w-[25px] font-[Roboto] text-[10px]">70%</span>
        <Caret color="#8a8fa2" />
        <div className="ml-[4px] flex items-center gap-[4px]">
          <Icon size={10}><path d="M.5.500h9v9h-9zM2.500 2.500h5v5h-5z" stroke="#dfe1e8" /></Icon>
          <Icon size={10}><path d="M.5.500h9v9h-9zM5 0v10M0 5h10" stroke="#a9adbb" /></Icon>
          <Icon size={10}><path d="M0 1h10M1.500 1v4.500h7V1M5 6v2M2 9.500l3-2 3 2" stroke="#fff" /></Icon>
        </div>
        <span className="ml-[6px] mr-[2px] mt-[11px]">
          <Icon size={8}>
            <path fill="#d5d7df" d="M6 0h2v2H6zM3 3h2v2H3zM6 3h2v2H6zM0 6h2v2H0zM3 6h2v2H3zM6 6h2v2H6z" />
          </Icon>
        </span>
      </div>
    </footer>
  );
}

function Watermark() {
  const ink = "text-white/70 [-webkit-text-stroke:1px_#d4d4d4]";
  return (
    <div className={`pointer-events-none absolute bottom-[20px] right-[54px] z-20 w-[178px] font-['Liberation_Sans','Noto_Sans_CJK_SC',sans-serif] ${ink}`}>
      <div className="flex h-[58px] items-end whitespace-nowrap">
        <span className="text-[38px] font-bold leading-[34px]">Bai</span>
        <svg width="52" height="58" viewBox="0 0 52 58" fill="#fff" fillOpacity=".7" stroke="#d4d4d4">
          <ellipse cx="7" cy="24" rx="6" ry="8" />
          <ellipse cx="20" cy="10" rx="6" ry="9" />
          <ellipse cx="36" cy="10" rx="6" ry="9" />
          <ellipse cx="46" cy="25" rx="6" ry="8" />
          <path d="M26 23c9 0 11 9 17 15 8 8 4 18-5 17-8-2-16-2-24 0-9 1-13-9-6-17 7-7 9-15 18-15z" />
          <text x="27" y="51" textAnchor="middle" fontSize="22" fontWeight="700">du</text>
        </svg>
        <span className="text-[31px] font-bold leading-[38px]">经验</span>
      </div>
      <div className="text-[22px] leading-[28px]">jingyan.baidu.com</div>
    </div>
  );
}

function Annotation() {
  return (
    <svg className="pointer-events-none absolute right-0 top-[400px] z-10" width="324" height="100" viewBox="675 401 324 100" fill="none">
      <path fill="#fb3434" d="M679 409l14-5v3l191 31-191-25-1 4z" />
      <path d="M904.500 434.500h92v59h-92z" stroke="#f5262b" strokeWidth="2" />
    </svg>
  );
}

export default function App() {
  return (
    <div className="relative flex h-screen w-full flex-col overflow-hidden border-l border-r border-t border-[#7c8196] bg-white font-['Noto_Sans','Noto_Sans_CJK_SC',sans-serif]">
      <TitleBar />
      <MenuBar />
      <Ribbon />
      <main className="flex min-h-0 flex-1">
        <section className="flex min-w-0 flex-1 flex-col">
          <DocTabs />
          <div className="flex min-h-0 flex-1">
            <MindMap />
            <VerticalScroll />
          </div>
          <HorizontalScroll />
          <ColorBar />
        </section>
        <SidePanel />
      </main>
      <StatusBar />
      <Annotation />
      <Watermark />
    </div>
  );
}
